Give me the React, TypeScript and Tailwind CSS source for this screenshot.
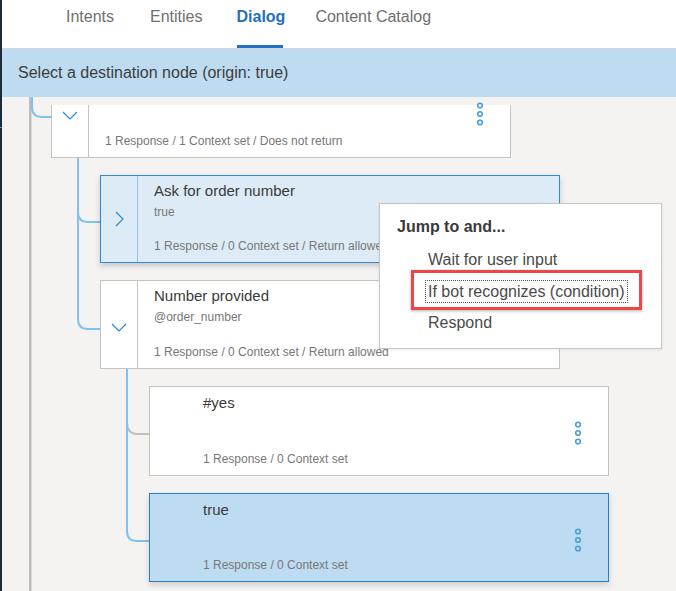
import React from 'react';

const font = { fontFamily: '"Liberation Sans", Arial, sans-serif' };

const Dots = () => (
  <svg width="8" height="24" viewBox="0 0 8 24" className="shrink-0">
    <circle cx="4" cy="3.5" r="2.3" fill="none" stroke="#4a9fd8" strokeWidth="1.6" />
    <circle cx="4" cy="12" r="2.3" fill="none" stroke="#4a9fd8" strokeWidth="1.6" />
    <circle cx="4" cy="20.5" r="2.3" fill="none" stroke="#4a9fd8" strokeWidth="1.6" />
  </svg>
);

const ChevronDown = () => (
  <svg width="16" height="9" viewBox="0 0 16 9">
    <path d="M1 1 L8 8 L15 1" fill="none" stroke="#2a87d0" strokeWidth="1.2" />
  </svg>
);

const ChevronRight = () => (
  <svg width="9" height="16" viewBox="0 0 9 16">
    <path d="M1 1 L8 8 L1 15" fill="none" stroke="#2a87d0" strokeWidth="1.2" />
  </svg>
);

const App = () => {
  return (
    <div className="flex w-[676px] h-[591px] overflow-hidden bg-white" style={font}>
      {/* dark app rail */}
      <div className="w-[2px] shrink-0 bg-[#1c2b36] flex flex-col">
        <div className="h-[127px]" />
        <div className="h-[1px] bg-[#4a9fd8]" />
      </div>

      <div className="flex flex-col flex-1 min-w-0">
        {/* Tabs */}
        <div className="h-[49px] shrink-0 bg-white border-b border-[#d3d3d3] flex items-start pl-[64px] text-[16px] text-[#6f6f6f]">
          <div className="pt-[5px]">Intents</div>
          <div className="pt-[5px] ml-[36px]">Entities</div>
          <div className="relative pt-[5px] ml-[34px] h-full font-bold text-[#1f70c1]">
            Dialog
            <div className="absolute left-0 right-[2px] bottom-0 h-[3px] bg-[#1f70c1]" />
          </div>
          <div className="pt-[5px] ml-[30px]">Content Catalog</div>
        </div>

        {/* Banner */}
        <div className="h-[48px] shrink-0 bg-[#bedcf1] flex items-center pl-[16px] text-[16px] text-[#3d3d3d]">
          Select a destination node (origin: true)
        </div>

        {/* Canvas */}
        <div className="relative flex-1 bg-[#f4f3f2] overflow-hidden">
          {/* connectors */}
          <svg className="absolute left-0 top-0" width="674" height="494">
            <rect x="27" y="0" width="2.5" height="494" fill="#c0bdb8" />
            <path d="M30 0 V10 Q30 20 40 20 H50" fill="none" stroke="#7fc1f0" strokeWidth="2" />
            <path d="M76 60 V115 Q76 125 86 125 H98" fill="none" stroke="#7fc1f0" strokeWidth="2" />
            <path d="M76 115 V222 Q76 232 86 232 H98" fill="none" stroke="#7fc1f0" strokeWidth="2" />
            <path d="M125 326 Q125 337 136 337 H147" fill="none" stroke="#c0bdb8" strokeWidth="2" />
            <path d="M125 272 V434 Q125 444 135 444 H147" fill="none" stroke="#7fc1f0" strokeWidth="2" />
          </svg>

          <div className="relative flex flex-col pt-[8px]">
            {/* Node 1 (scrolled) */}
            <div className="ml-[49px] w-[460px] h-[53px] flex bg-white border border-t-0 border-[#c6c3bf]">
              <div className="w-[37px] shrink-0 border-r border-[#c6c3bf] flex justify-center pt-[6px]">
                <ChevronDown />
              </div>
              <div className="flex-1 flex items-end pl-[16px] pb-[7px] text-[12px] text-[#777]">
                1 Response / 1 Context set / Does not return
              </div>
              <div className="pr-[26px] -mt-[3px]">
                <Dots />
              </div>
            </div>

            {/* Node 2 */}
            <div className="mt-[17px] ml-[98px] w-[460px] h-[88px] flex bg-[#dcebf6] border border-[#2f8ad6] shadow-[0_3px_6px_rgba(0,0,0,0.18)]">
              <div className="w-[37px] shrink-0 border-r border-[#8cc4ec] flex items-center justify-center">
                <ChevronRight />
              </div>
              <div className="flex-1 flex flex-col pl-[16px] pt-[5px]">
                <div className="text-[15px] text-[#3a3a3a] leading-[20px]">Ask for order number</div>
                <div className="text-[12px] text-[#777] leading-[16px] mt-[3px]">true</div>
                <div className="text-[12px] text-[#777] mt-auto pb-[7px]">1 Response / 0 Context set / Return allowed</div>
              </div>
            </div>

            {/* Node 3 */}
            <div className="mt-[17px] ml-[98px] w-[460px] h-[89px] flex bg-white border border-[#c6c3bf]">
              <div className="w-[37px] shrink-0 border-r border-[#c6c3bf] flex items-center justify-center pt-[6px]">
                <ChevronDown />
              </div>
              <div className="flex-1 flex flex-col pl-[16px] pt-[5px]">
                <div className="text-[15px] text-[#3a3a3a] leading-[20px]">Number provided</div>
                <div className="text-[12px] text-[#777] leading-[16px] mt-[3px]">@order_number</div>
                <div className="text-[12px] text-[#777] mt-auto pb-[7px]">1 Response / 0 Context set / Return allowed</div>
              </div>
            </div>

            {/* #yes */}
            <div className="mt-[17px] ml-[147px] w-[460px] h-[90px] flex bg-white border border-[#c6c3bf]">
              <div className="flex-1 flex flex-col pl-[53px] pt-[6px]">
                <div className="text-[15px] text-[#3a3a3a] leading-[20px]">#yes</div>
                <div className="text-[12px] text-[#777] mt-auto pb-[7px]">1 Response / 0 Context set</div>
              </div>
              <div className="pr-[26px] flex items-center pt-[4px]">
                <Dots />
              </div>
            </div>

            {/* true */}
            <div className="mt-[17px] ml-[147px] w-[460px] h-[89px] flex bg-[#bedcf1] border border-[#1f7fc8] shadow-[0_3px_6px_rgba(0,0,0,0.15)]">
              <div className="flex-1 flex flex-col pl-[53px] pt-[6px]">
                <div className="text-[15px] text-[#3a3a3a] leading-[20px]">true</div>
                <div className="text-[12px] text-[#777] mt-auto pb-[7px]">1 Response / 0 Context set</div>
              </div>
              <div className="pr-[26px] flex items-center pt-[4px]">
                <Dots />
              </div>
            </div>
          </div>

          {/* Jump-to menu */}
          <div className="absolute left-[377px] top-[106px] w-[283px] h-[146px] bg-white border border-[#c6c6c6] shadow-[0_1px_3px_rgba(0,0,0,0.08)]">
            <div className="pl-[17px] pt-[13px] text-[16px] font-bold text-[#3a3a3a] leading-[20px]">Jump to and...</div>
            <div className="flex flex-col pl-[48px] mt-[13px] text-[16px] text-[#4a4a4a] leading-[20px] gap-[11.5px]">
              <div>Wait for user input</div>
              <div>
                <span className="outline outline-1 outline-dotted outline-[#555] outline-offset-[2px]">If bot recognizes (condition)</span>
              </div>
              <div>Respond</div>
            </div>
            {/* red annotation */}
            <div className="absolute left-[31px] top-[66px] w-[231px] h-[40px] border-[3px] border-[#ef4545] shadow-[0_1px_3px_rgba(0,0,0,0.3)]" />
          </div>
        </div>
      </div>
    </div>
  );
};

export default App;
